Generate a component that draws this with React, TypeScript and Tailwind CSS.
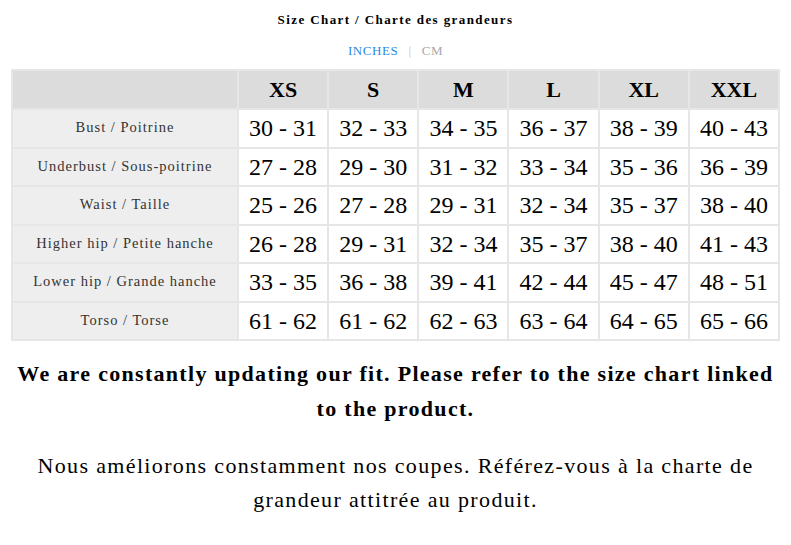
import React, { useState } from "react";

/* ── Size chart data ─────────────────────────────────────────── */

const SIZES = ["XS", "S", "M", "L", "XL", "XXL"];

const ROWS: { label: string; values: string[] }[] = [
  { label: "Bust / Poitrine", values: ["30 - 31", "32 - 33", "34 - 35", "36 - 37", "38 - 39", "40 - 43"] },
  { label: "Underbust / Sous-poitrine", values: ["27 - 28", "29 - 30", "31 - 32", "33 - 34", "35 - 36", "36 - 39"] },
  { label: "Waist / Taille", values: ["25 - 26", "27 - 28", "29 - 31", "32 - 34", "35 - 37", "38 - 40"] },
  { label: "Higher hip / Petite hanche", values: ["26 - 28", "29 - 31", "32 - 34", "35 - 37", "38 - 40", "41 - 43"] },
  { label: "Lower hip / Grande hanche", values: ["33 - 35", "36 - 38", "39 - 41", "42 - 44", "45 - 47", "48 - 51"] },
  { label: "Torso / Torse", values: ["61 - 62", "61 - 62", "62 - 63", "63 - 64", "64 - 65", "65 - 66"] },
];

type Unit = "in" | "cm";

export default function App() {
  const [unit, setUnit] = useState<Unit>("in");

  return (
    <div className="min-h-[545px] bg-white font-['Liberation_Serif',serif] text-black">
      {/* ── Heading ─────────────────────────────────────────── */}
      <h2 className="pt-[11px] text-center text-[13px] font-bold leading-[18px] tracking-[1.4px]">
        Size Chart / Charte des grandeurs
      </h2>

      <div className="mt-[14px] flex items-center justify-center text-[13px] leading-[16px] tracking-[0.6px]">
        <button
          onClick={() => setUnit("in")}
          className={unit === "in" ? "text-[#2a8be6]" : "text-[#a8a8a8]"}
        >
          INCHES
        </button>
        <span className="mx-[10px] text-[#c4c4c4]">|</span>
        <button
          onClick={() => setUnit("cm")}
          className={unit === "cm" ? "text-[#2a8be6]" : "text-[#a8a8a8]"}
        >
          CM
        </button>
      </div>

      {/* ── Table ───────────────────────────────────────────── */}
      <div className="mx-[11px] mt-[10px] grid grid-cols-[224px_repeat(6,1fr)] gap-[2px] bg-[#e6e6e6] p-[2px]">
        <div className="h-[37px] bg-[#dcdcdc]" />
        {SIZES.map((s) => (
          <div
            key={s}
            className="flex h-[37px] items-center justify-center bg-[#dcdcdc] text-[22px] font-bold"
          >
            {s}
          </div>
        ))}

        {ROWS.map((row) => (
          <React.Fragment key={row.label}>
            <div className="flex h-[36.5px] items-center justify-center bg-[#eeeeee] text-[14.5px] tracking-[1px] text-[#333]">
              {row.label}
            </div>
            {row.values.map((v, i) => (
              <div
                key={i}
                className="flex h-[36.5px] items-center justify-center bg-white text-[24px]"
              >
                {v}
              </div>
            ))}
          </React.Fragment>
        ))}
      </div>

      {/* ── Notes ───────────────────────────────────────────── */}
      <p className="mt-[15px] px-[11px] text-center text-[22px] font-bold leading-[35px] tracking-[1.3px]">
        We are constantly updating our fit. Please refer to the size chart linked to the product.
      </p>
      <p className="mt-[23px] px-[11px] text-center text-[22px] leading-[34px] tracking-[1.35px]">
        Nous améliorons constamment nos coupes. Référez-vous à la charte de grandeur attitrée au produit.
      </p>
    </div>
  );
}
